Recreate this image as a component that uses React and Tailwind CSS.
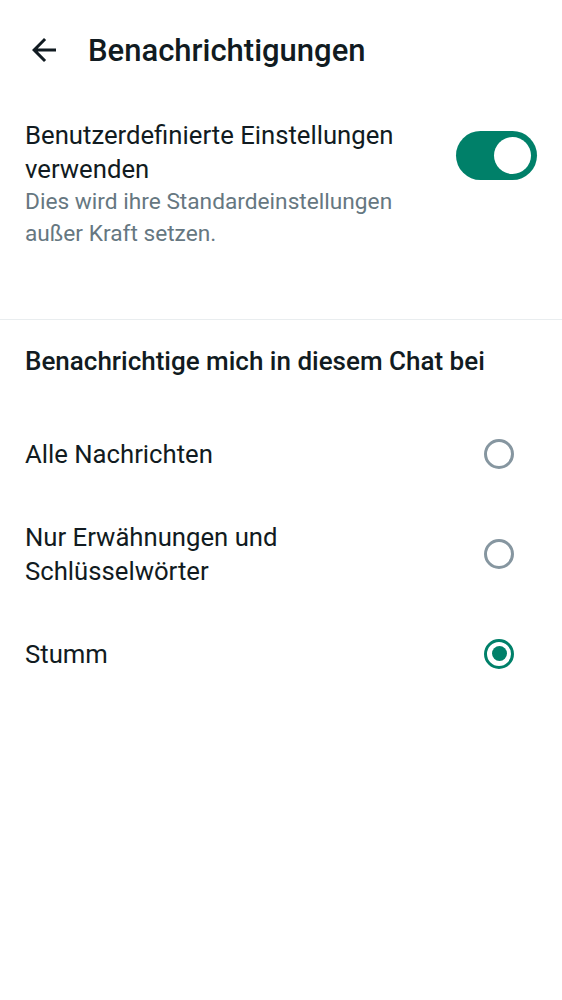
import React, { useState } from 'react';

const options = [
  { id: 'all', label: 'Alle Nachrichten' },
  { id: 'mentions', label: 'Nur Erwähnungen und\nSchlüsselwörter' },
  { id: 'mute', label: 'Stumm' },
];

const Radio = ({ checked }) => (
  <div
    className={`w-[30px] h-[30px] rounded-full border-[3px] flex items-center justify-center shrink-0 ${
      checked ? 'border-[#008069]' : 'border-[#8696a0]'
    }`}
  >
    {checked && <div className="w-[15px] h-[15px] rounded-full bg-[#008069]" />}
  </div>
);

const App = () => {
  const [custom, setCustom] = useState(true);
  const [selected, setSelected] = useState('mute');

  return (
    <div className="min-h-screen w-full bg-white text-[#111b21]" style={{ fontFamily: 'Roboto, "Noto Sans", sans-serif' }}>
      {/* Header */}
      <div className="h-[100px] flex items-center pl-[26px]">
        <svg width="36" height="36" viewBox="0 0 24 24" fill="#111b21">
          <path d="M20 11H7.83l5.59-5.59L12 4l-8 8 8 8 1.41-1.41L7.83 13H20v-2z" />
        </svg>
        <h1 className="ml-[26px] text-[31px] font-medium leading-none">Benachrichtigungen</h1>
      </div>

      {/* Custom settings toggle */}
      <div className="flex items-start justify-between pl-[25px] pr-[25px] pt-[18px] pb-[69px] border-b border-[#e9edef]">
        <div className="pr-4">
          <div className="text-[25.7px] leading-[34px]">
            Benutzerdefinierte Einstellungen
            <br />
            verwenden
          </div>
          <div className="text-[22.7px] leading-[32px] text-[#667781]">
            Dies wird ihre Standardeinstellungen
            <br />
            außer Kraft setzen.
          </div>
        </div>
        <button
          onClick={() => setCustom(!custom)}
          className={`mt-[13px] w-[81px] h-[49px] rounded-full flex items-center shrink-0 px-[6px] ${
            custom ? 'bg-[#008069] justify-end' : 'bg-[#8696a0] justify-start'
          }`}
        >
          <span className="w-[37px] h-[37px] rounded-full bg-white" />
        </button>
      </div>

      {/* Heading */}
      <div className="pl-[25px] pt-[25px] pb-[35px] text-[26px] font-medium leading-[32px]">
        Benachrichtige mich in diesem Chat bei
      </div>

      {/* Options */}
      <div className="flex flex-col">
        {options.map((o) => (
          <button
            key={o.id}
            onClick={() => setSelected(o.id)}
            className="flex items-center justify-between pl-[25px] pr-[48px] py-[24.5px] text-left"
          >
            <span className="text-[25.7px] leading-[34px] whitespace-pre-line">{o.label}</span>
            <Radio checked={selected === o.id} />
          </button>
        ))}
      </div>
    </div>
  );
};

export default App;
